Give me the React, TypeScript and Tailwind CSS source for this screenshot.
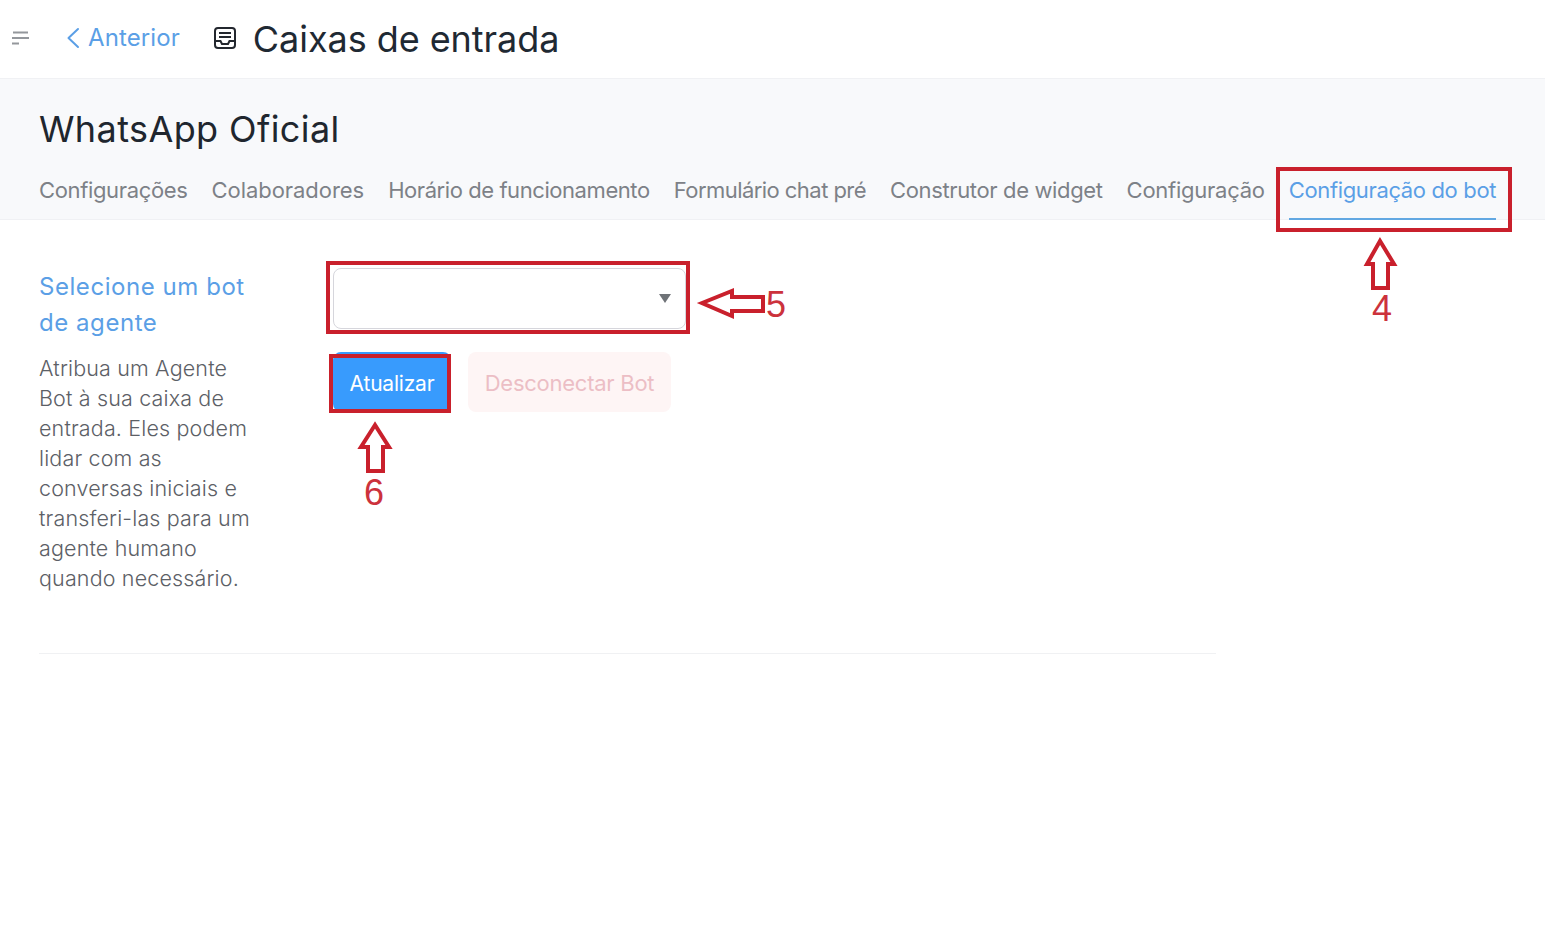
const FONT = "font-['Inter','Noto_Sans',sans-serif]";

const tabs = [
  { label: "Configurações", tracking: "tracking-[-0.35px]" },
  { label: "Colaboradores", tracking: "tracking-[-0.05px]" },
  { label: "Horário de funcionamento", tracking: "tracking-[-0.43px]" },
  { label: "Formulário chat pré", tracking: "tracking-[-0.55px]" },
  { label: "Construtor de widget", tracking: "tracking-[-0.36px]" },
  { label: "Configuração", tracking: "tracking-[-0.25px]" },
];

function Annotations() {
  return (
    <>
      <div className="absolute left-[1276px] top-[167px] w-[236px] h-[65px] border-4 border-[#c9202c]" />
      <div className="absolute left-[326px] top-[261px] w-[364px] h-[73px] border-4 border-[#c9202c]" />
      <div className="absolute left-[329px] top-[354px] w-[122px] h-[59px] border-4 border-[#c9202c]" />
      <svg className="absolute left-0 top-0 pointer-events-none" width="1545" height="941" fill="white" stroke="#c9202c" strokeWidth="4">
        <path d="M1380 241 L1367 264 L1373 264 L1373 288 L1388 288 L1388 264 L1394 264 Z" />
        <path d="M375 425 L361 447 L368 447 L368 471 L383 471 L383 447 L389 447 Z" />
        <path d="M702 303 L732 291 L732 297 L763 297 L763 311 L732 311 L732 316 Z" />
      </svg>
      <span className="absolute left-[1372px] top-[288px] text-[36px] leading-[42px] text-[#cc323c] font-['Liberation_Sans',sans-serif]">4</span>
      <span className="absolute left-[766px] top-[284px] text-[36px] leading-[42px] text-[#cc323c] font-['Liberation_Sans',sans-serif]">5</span>
      <span className="absolute left-[364px] top-[472px] text-[36px] leading-[42px] text-[#cc323c] font-['Liberation_Sans',sans-serif]">6</span>
    </>
  );
}

export default function App() {
  return (
    <div className={`relative w-[1545px] h-[941px] overflow-hidden bg-white ${FONT}`}>
      <header className="h-[79px] flex items-center border-b border-[#f0f1f4] bg-white">
        <svg className="ml-[12px] mt-[-2px]" width="18" height="16" viewBox="0 0 18 16" fill="none" stroke="#94979c" strokeWidth="2">
          <path d="M1 2.5h15M0 8h17M0 13.5h7" />
        </svg>
        <div className="ml-[35px] flex items-center text-[#5b9fe6] mt-[-3px]">
          <svg width="16" height="24" viewBox="0 0 16 24" fill="none" stroke="currentColor" strokeWidth="2" strokeLinecap="round" strokeLinejoin="round">
            <path d="M13 3 L3.5 12 L13 21" />
          </svg>
          <span className="ml-[7px] text-[24px] leading-[30px] tracking-[0.1px]">Anterior</span>
        </div>
        <svg className="ml-[33px] mt-[-3px]" width="24" height="24" viewBox="0 0 24 24" fill="none" stroke="#23272e" strokeWidth="2">
          <rect x="2" y="2" width="20" height="20" rx="3" />
          <path d="M6 7h12M6 11h12" strokeWidth="2.2" />
          <path d="M2 15h5.5l1.5 3h6l1.5-3H22" />
        </svg>
        <h1 className="ml-[16px] text-[36px] leading-[44px] font-normal text-[#1f2933] tracking-[-0.05px]">Caixas de entrada</h1>
      </header>

      <section className="h-[141px] bg-[#f8f9fb] border-b border-[#f0f1f4] px-[39px]">
        <h2 className="pt-[26px] text-[36px] leading-[48px] font-normal text-[#20262e] tracking-[0.4px]">WhatsApp Oficial</h2>
        <nav className="mt-[21px] flex gap-[24px]">
          {tabs.map((t) => (
            <span key={t.label} className={`h-[46px] pt-[1px] text-[22px] leading-[30px] text-[#7d8187] whitespace-nowrap ${t.tracking}`}>
              {t.label}
            </span>
          ))}
          <span className="h-[46px] pt-[1px] text-[22px] leading-[30px] text-[#5b9fe6] tracking-[-0.36px] whitespace-nowrap border-b-2 border-[#62a8e2]">
            Configuração do bot
          </span>
        </nav>
      </section>

      <main className="w-[1177px] ml-[39px] border-b border-[#f0f1f3] h-[434px] flex">
        <div className="w-[294px] pt-[49px]">
          <h3 className="w-[225px] text-[24px] leading-[36px] font-normal text-[#5b9fe6] tracking-[0.55px]">Selecione um bot de agente</h3>
          <p className="w-[220px] mt-[12px] text-[21.5px] leading-[30px] font-light text-[#5c6066] tracking-[0.15px]">
            Atribua um Agente Bot à sua caixa de entrada. Eles podem lidar com as conversas iniciais e transferi-las para um agente humano quando necessário.
          </p>
        </div>
        <div className="pt-[48px]">
          <div className="w-[353px] h-[61px] rounded-[8px] border border-[#d6d6dc] bg-white flex items-center justify-end pr-[14px]">
            <svg width="12" height="9" viewBox="0 0 12 9" fill="#6f7378"><path d="M0 0h12L6 9z" /></svg>
          </div>
          <div className="mt-[23px] flex gap-[17px]">
            <button className="w-[118px] h-[60px] pt-[3px] rounded-[8px] bg-[#389bfd] text-white text-[21px] tracking-[-0.2px]">Atualizar</button>
            <button className="w-[203px] h-[60px] pt-[3px] rounded-[8px] bg-[#fef5f5] text-[#ecbec5] text-[22px] tracking-[-0.25px]">Desconectar Bot</button>
          </div>
        </div>
      </main>
      <Annotations />
    </div>
  );
}
